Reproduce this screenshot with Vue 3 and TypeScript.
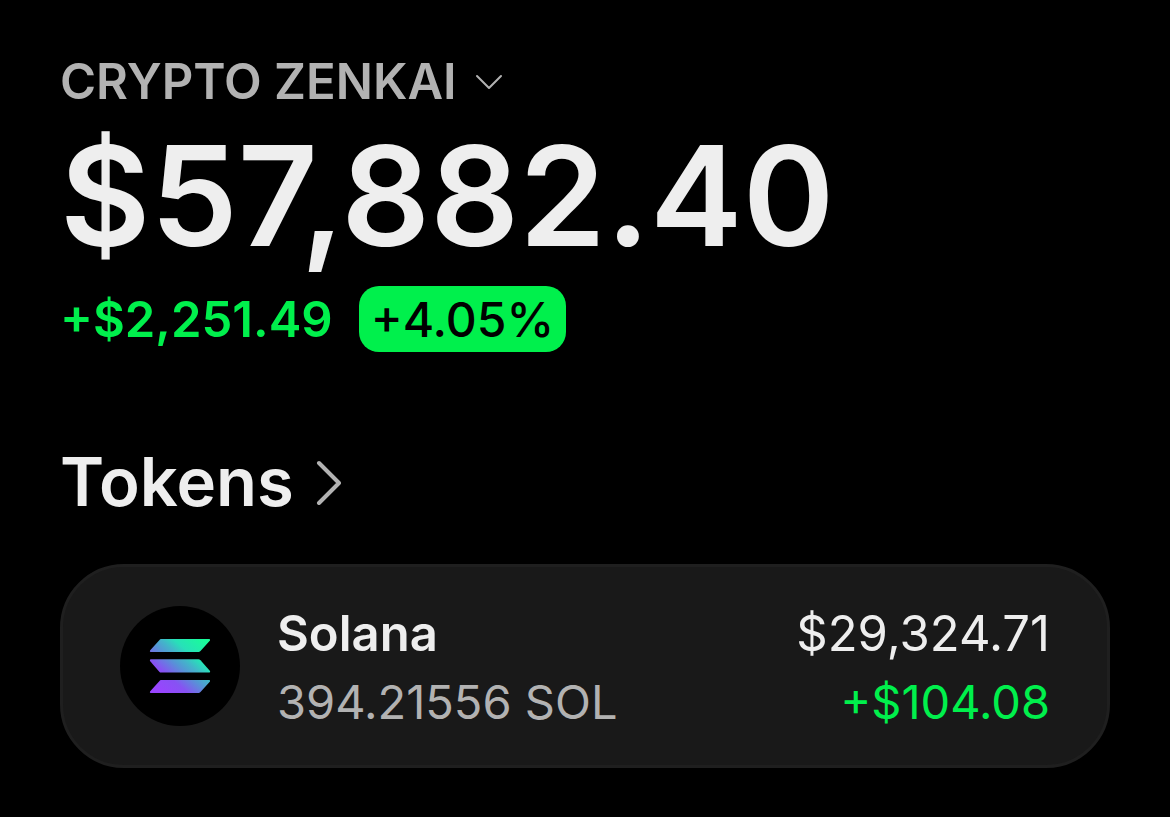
<script setup lang="ts">
interface Token {
  name: string
  amount: string
  value: string
  change: string
}

const tokens: Token[] = [
  { name: 'Solana', amount: '394.21556 SOL', value: '$29,324.71', change: '+$104.08' },
]
</script>

<template>
  <main class="wallet">
    <button class="account" type="button">
      <span>CRYPTO ZENKAI</span>
      <svg class="account-chevron" viewBox="0 0 28 16" aria-hidden="true">
        <path d="M2 2 L14 14 L26 2" />
      </svg>
    </button>
    <h1 class="balance">$57,882.40</h1>
    <div class="change">
      <span class="change-value">+$2,251.49</span>
      <span class="badge">+4.05%</span>
    </div>
    <h2 class="heading">
      <button class="heading-link" type="button">
        <span>Tokens</span>
        <svg class="heading-chevron" viewBox="0 0 28 46" aria-hidden="true">
          <path d="M4 4 L24 24 L4 44" />
        </svg>
      </button>
    </h2>
    <ul class="tokens">
      <li v-for="token in tokens" :key="token.name" class="card">
        <svg class="logo" viewBox="0 0 120 120" aria-hidden="true">
          <defs>
            <linearGradient id="sol" gradientUnits="userSpaceOnUse" x1="35" y1="88" x2="84" y2="32">
              <stop offset="0.08" stop-color="#9945ff" />
              <stop offset="0.3" stop-color="#8752f3" />
              <stop offset="0.5" stop-color="#5497d5" />
              <stop offset="0.6" stop-color="#43b4ca" />
              <stop offset="0.72" stop-color="#28e0b9" />
              <stop offset="0.97" stop-color="#19fb9b" />
            </linearGradient>
          </defs>
          <circle cx="60" cy="60" r="60" fill="#000" />
          <g fill="url(#sol)">
            <path d="M41 33 H89.5 Q90.5 33.5 90 34.5 L80.5 45 Q79.5 46 78.5 46 H30.5 Q29.5 45.5 30 44.5 L39.5 34 Q40 33 41 33Z" />
            <path d="M30.5 53.3 H78.5 Q79.5 53.3 80.5 54.3 L90 65 Q90.5 66 89.5 66.5 H41 Q40 66.5 39.5 66 L30 55 Q29.5 54 30.5 53.3Z" />
            <path d="M41 74 H89.5 Q90.5 74.5 90 75.5 L80.5 86 Q79.5 87 78.5 87 H30.5 Q29.5 86.5 30 85.5 L39.5 75 Q40 74 41 74Z" />
          </g>
        </svg>
        <div class="info">
          <span class="name">{{ token.name }}</span>
          <span class="amount">{{ token.amount }}</span>
        </div>
        <div class="info figures">
          <span class="value">{{ token.value }}</span>
          <span class="gain">{{ token.change }}</span>
        </div>
      </li>
    </ul>
  </main>
</template>

<style>
body {
  margin: 0;
  background: #000;
}
</style>

<style scoped>
.wallet {
  display: flex;
  flex-direction: column;
  align-items: flex-start;
  padding: 52px 60px 48px;
  color: #eee;
  font-family: Inter, "Liberation Sans", sans-serif;
}

button {
  padding: 0;
  border: 0;
  background: none;
  color: inherit;
  font: inherit;
  cursor: pointer;
}

svg path {
  stroke-linecap: round;
  stroke-linejoin: round;
}

.account {
  display: flex;
  align-items: center;
  gap: 18px;
  color: #b2b2b2;
  font-size: 49px;
  font-weight: 600;
  line-height: 60px;
}

.account-chevron {
  width: 28px;
  height: 16px;
  fill: none;
  stroke: #b2b2b2;
  stroke-width: 2;
}

.balance {
  margin: 8px 0 0;
  font-size: 139px;
  font-weight: 600;
  line-height: 152px;
}

.change {
  display: flex;
  align-items: center;
  gap: 26px;
  margin-top: 14px;
  font-weight: 600;
}

.change-value {
  color: #00f04c;
  font-size: 49px;
}

.badge {
  padding: 2px 12px 0;
  border-radius: 20px;
  background: #00f04c;
  color: #000;
  font-size: 48px;
  font-weight: 500;
  line-height: 64px;
}

.heading {
  margin: 86px 0 0;
  font-size: 67px;
  font-weight: 600;
  line-height: 88px;
}

.heading-link {
  display: flex;
  align-items: center;
  gap: 21px;
}

.heading-chevron {
  width: 28px;
  height: 46px;
  fill: none;
  stroke: #b2b2b2;
  stroke-width: 4;
}

.tokens {
  align-self: stretch;
  margin: 38px 0 0;
  padding: 0;
  list-style: none;
}

.card {
  display: flex;
  align-items: center;
  padding: 29px 57px;
  border: 3px solid #1f1f1f;
  border-radius: 64px;
  background: #191919;
}

.logo {
  width: 120px;
  height: 120px;
}

.info {
  display: flex;
  flex-direction: column;
  margin-left: 37px;
  padding-top: 4px;
  line-height: 68px;
}

.figures {
  align-items: flex-end;
  margin-left: auto;
}

.name,
.value {
  font-size: 49px;
}

.name {
  font-weight: 600;
}

.amount,
.gain {
  font-size: 47px;
}

.amount {
  color: #b2b2b2;
}

.gain {
  color: #00f04c;
}
</style>
